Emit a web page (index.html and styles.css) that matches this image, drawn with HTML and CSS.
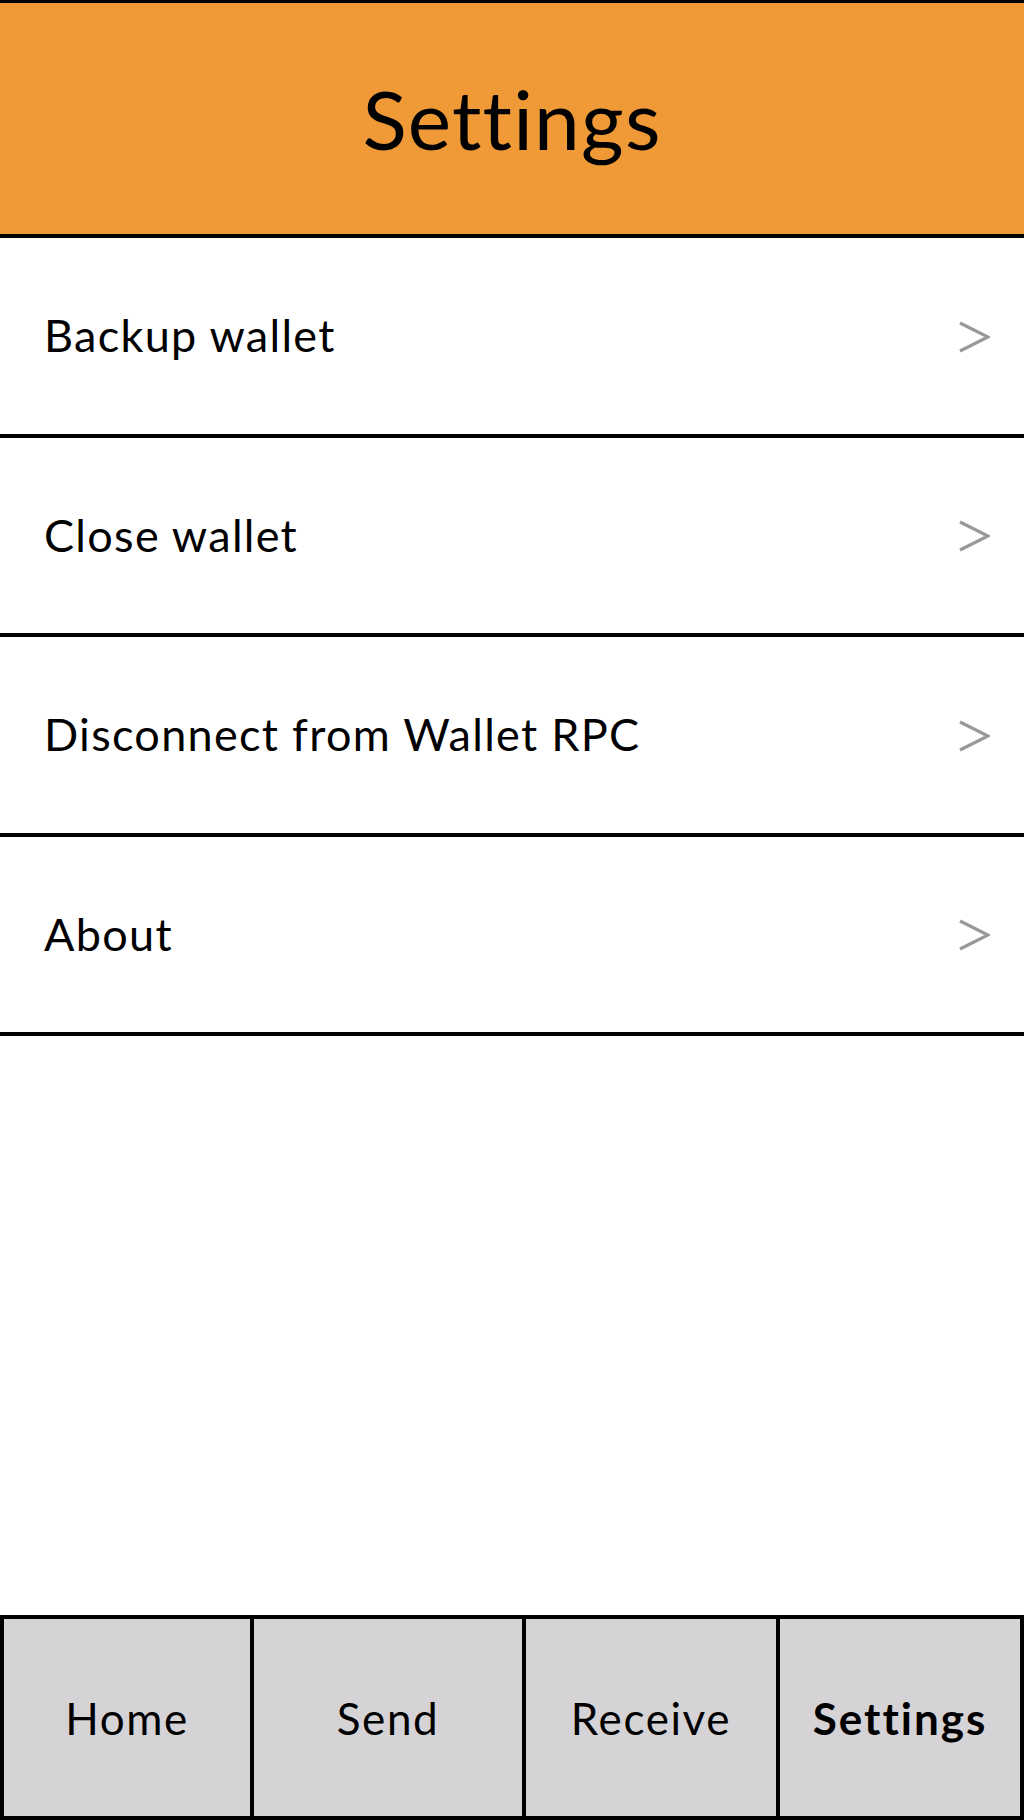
FILE: index.html
```html
<!DOCTYPE html>
<html lang="en">
<head>
<meta charset="utf-8">
<title>Settings</title>
<link rel="stylesheet" href="styles.css">
</head>
<body>
<div class="app">
  <header class="topbar"><h1 class="title">Settings</h1></header>
  <ul class="menu">
    <li class="row"><span class="label">Backup wallet</span><svg class="chev" viewBox="0 0 32 32" width="32" height="32"><polyline points="2,2 30,16 2,30"/></svg></li>
    <li class="row"><span class="label">Close wallet</span><svg class="chev" viewBox="0 0 32 32" width="32" height="32"><polyline points="2,2 30,16 2,30"/></svg></li>
    <li class="row"><span class="label">Disconnect from Wallet RPC</span><svg class="chev" viewBox="0 0 32 32" width="32" height="32"><polyline points="2,2 30,16 2,30"/></svg></li>
    <li class="row"><span class="label">About</span><svg class="chev" viewBox="0 0 32 32" width="32" height="32"><polyline points="2,2 30,16 2,30"/></svg></li>
  </ul>
  <div class="spacer"></div>
  <nav class="tabs">
    <div class="tab">Home</div>
    <div class="tab">Send</div>
    <div class="tab">Receive</div>
    <div class="tab active">Settings</div>
  </nav>
</div>
</body>
</html>
```
FILE: styles.css
```css
* { box-sizing: border-box; }
html, body { margin: 0; padding: 0; background: #fff; }
body { font-family: Lato, "Open Sans", "Liberation Sans", sans-serif; color: #000; }
.app { width: 1024px; height: 1820px; display: flex; flex-direction: column; }
.topbar {
  height: 238px;
  background: #EF9A37;
  border-top: 3px solid #000;
  border-bottom: 4px solid #000;
  display: flex; align-items: center; justify-content: center;
}
.title { margin: 0; font-size: 82px; font-weight: 400; line-height: 1; letter-spacing: 1.2px; padding-bottom: 2px; }
.menu { list-style: none; margin: 0; padding: 0; }
.row {
  height: 199.5px;
  border-bottom: 4px solid #000;
  display: flex; align-items: center; justify-content: space-between;
  padding: 0 34px 0 44px;
  font-size: 45px;
}
.label { line-height: 1; letter-spacing: 1.3px; }
.chev { width: 32px; height: 32px; margin-top: 2px; }
.chev polyline { fill: none; stroke: #999; stroke-width: 3.2; stroke-linejoin: miter; }
.spacer { flex: 1; }
.tabs {
  height: 205px;
  background: #000;
  border: 4px solid #000;
  display: grid;
  grid-template-columns: 246px 268px 250px 240px;
  column-gap: 4px;
}
.tab {
  background: #D5D3D5;
  display: flex; align-items: center; justify-content: center;
  font-size: 44px;
  letter-spacing: 1.6px;
}
.tab.active { font-weight: 700; letter-spacing: 2px; }
```
